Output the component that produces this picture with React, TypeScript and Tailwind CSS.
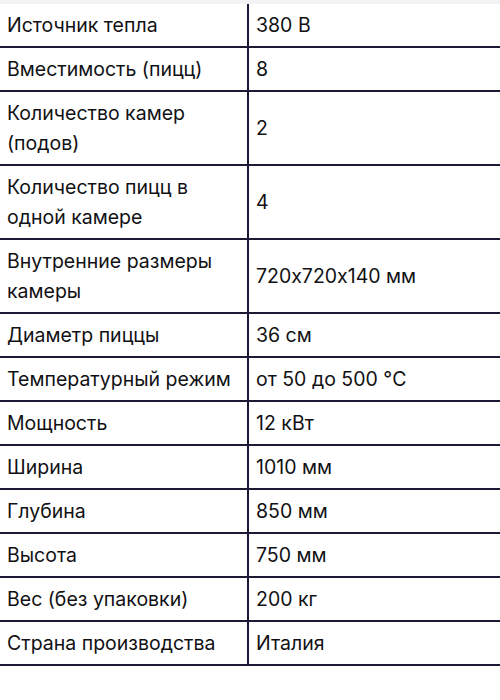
import React from "react";

const specs: [string, string][] = [
  ["Источник тепла", "380 В"],
  ["Вместимость (пицц)", "8"],
  ["Количество камер (подов)", "2"],
  ["Количество пицц в одной камере", "4"],
  ["Внутренние размеры камеры", "720x720x140 мм"],
  ["Диаметр пиццы", "36 см"],
  ["Температурный режим", "от 50 до 500 °C"],
  ["Мощность", "12 кВт"],
  ["Ширина", "1010 мм"],
  ["Глубина", "850 мм"],
  ["Высота", "750 мм"],
  ["Вес (без упаковки)", "200 кг"],
  ["Страна производства", "Италия"],
];

const App: React.FC = () => {
  return (
    <div className="w-[500px] h-[700px] bg-white font-['Inter',sans-serif] [font-feature-settings:'calt'_0] text-[19.5px] leading-[30px] text-[#111114]">
      <div className="h-[4px] bg-[#f3f3f5]" />
      <div className="flex flex-col">
        {specs.map(([label, value], index) => (
          <div key={index} className="flex border-b-2 border-[#1b1b38]">
            <div className="w-[249px] shrink-0 border-r-2 border-[#1b1b38] pl-[7px] pr-2 py-[6px]">
              {label}
            </div>
            <div className="flex-1 flex items-center pl-[7px] pr-2 py-[6px]">{value}</div>
          </div>
        ))}
      </div>
    </div>
  );
};

export default App;
